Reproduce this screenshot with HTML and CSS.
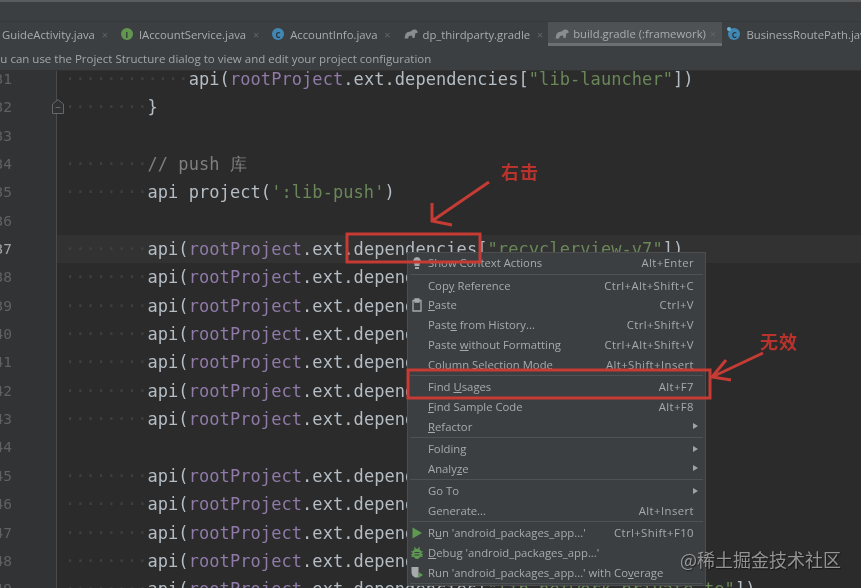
FILE: index.html
```html
<!DOCTYPE html>
<html lang="en">
<head>
  <meta charset="UTF-8">
  <title>build.gradle</title>
  <link rel="stylesheet" href="styles.css">
</head>
<body>
<div class="page">
  <div class="titlebar"></div>

  <div class="tabs">
    <div class="tab first"><span class="tab-name">GuideActivity.java</span><span class="close">×</span></div>
    <div class="tab"><span class="badge green">I</span><span class="tab-name">IAccountService.java</span><span class="close">×</span></div>
    <div class="tab"><span class="badge blue">C</span><span class="tab-name">AccountInfo.java</span><span class="close">×</span></div>
    <div class="tab">
      <svg class="elephant" viewBox="0 0 14 10"><path d="M0.500 9.500 L1.500 5 Q3 2 7 2.500 Q8 0 11 0.500 Q14 1 13.500 4 L11.500 4 L10.500 9 L8.500 9 L8 6.500 L5 7 L4 9.500 Z"/></svg>
      <span class="tab-name">dp_thirdparty.gradle</span><span class="close">×</span>
    </div>
    <div class="tab selected">
      <svg class="elephant" viewBox="0 0 14 10"><path d="M0.500 9.500 L1.500 5 Q3 2 7 2.500 Q8 0 11 0.500 Q14 1 13.500 4 L11.500 4 L10.500 9 L8.500 9 L8 6.500 L5 7 L4 9.500 Z"/></svg>
      <span class="tab-name">build.gradle (:framework)</span><span class="close">×</span>
    </div>
    <div class="tab"><span class="badge blue pin">C</span><span class="tab-name">BusinessRoutePath.java</span></div>
  </div>

  <div class="notice">You can use the Project Structure dialog to view and edit your project configuration</div>

  <div class="editor">
    <div class="line"><div class="gutter"><span class="num">31</span></div><div class="code"><i>············</i>api(<b>rootProject</b>.ext.dependencies[<s>"lib-launcher"</s>])</div></div>
    <div class="line"><div class="gutter"><span class="num">32</span></div><div class="code"><i>········</i>}</div>
      <svg class="fold" viewBox="0 0 12 15"><path d="M0.500 14.500 V5 L6 0.700 L11.500 5 V14.500 Z"/><path d="M3.500 8.500 H8.500"/></svg>
    </div>
    <div class="line"><div class="gutter"><span class="num">33</span></div><div class="code"></div></div>
    <div class="line"><div class="gutter"><span class="num">34</span></div><div class="code"><i>········</i><em>// push 库</em></div></div>
    <div class="line"><div class="gutter"><span class="num">35</span></div><div class="code"><i>········</i>api project(<s>':lib-push'</s>)</div></div>
    <div class="line"><div class="gutter"><span class="num">36</span></div><div class="code"></div></div>
    <div class="line current"><div class="gutter"><span class="num">37</span></div><div class="code"><i>········</i>api(<b>rootProject</b>.ext.dependencies[<s>"recyclerview-v7"</s>])</div></div>
    <div class="line"><div class="gutter"><span class="num">38</span></div><div class="code"><i>········</i>api(<b>rootProject</b>.ext.dependencies[<s>"cardview-v7"</s>])</div></div>
    <div class="line"><div class="gutter"><span class="num">39</span></div><div class="code"><i>········</i>api(<b>rootProject</b>.ext.dependencies[<s>"design"</s>])</div></div>
    <div class="line"><div class="gutter"><span class="num">40</span></div><div class="code"><i>········</i>api(<b>rootProject</b>.ext.dependencies[<s>"appcompat-v7"</s>])</div></div>
    <div class="line"><div class="gutter"><span class="num">41</span></div><div class="code"><i>········</i>api(<b>rootProject</b>.ext.dependencies[<s>"support-v4"</s>])</div></div>
    <div class="line"><div class="gutter"><span class="num">42</span></div><div class="code"><i>········</i>api(<b>rootProject</b>.ext.dependencies[<s>"gson"</s>])</div></div>
    <div class="line"><div class="gutter"><span class="num">43</span></div><div class="code"><i>········</i>api(<b>rootProject</b>.ext.dependencies[<s>"okhttp"</s>])</div></div>
    <div class="line"><div class="gutter"><span class="num">44</span></div><div class="code"></div></div>
    <div class="line"><div class="gutter"><span class="num">45</span></div><div class="code"><i>········</i>api(<b>rootProject</b>.ext.dependencies[<s>"retrofit"</s>])</div></div>
    <div class="line"><div class="gutter"><span class="num">46</span></div><div class="code"><i>········</i>api(<b>rootProject</b>.ext.dependencies[<s>"rxjava"</s>])</div></div>
    <div class="line"><div class="gutter"><span class="num">47</span></div><div class="code"><i>········</i>api(<b>rootProject</b>.ext.dependencies[<s>"rxandroid"</s>])</div></div>
    <div class="line"><div class="gutter"><span class="num">48</span></div><div class="code"><i>········</i>api(<b>rootProject</b>.ext.dependencies[<s>"glide"</s>])</div></div>
    <div class="line"><div class="gutter"><span class="num">49</span></div><div class="code"><i>········</i>api(<b>rootProject</b>.ext.dependencies[<s>"lib-network-private-te"</s>])</div></div>
  </div>

  <div class="menu">
    <div class="item"><svg class="icon" viewBox="0 0 12 14"><path class="bulb" d="M6 1 A4 4 0 0 1 8.500 8 V10 H3.500 V8 A4 4 0 0 1 6 1 Z M4 11 H8 V13 H4 Z"/></svg><span>Show Context Actions</span><kbd>Alt+Enter</kbd></div>
    <hr>
    <div class="item"><span>Cop<u>y</u> Reference</span><kbd>Ctrl+Alt+Shift+C</kbd></div>
    <div class="item"><svg class="icon" viewBox="0 0 12 14"><path class="clip" d="M2 2.500 H10 V13 H2 Z M4 1 H8 V4 H4 Z"/></svg><span><u>P</u>aste</span><kbd>Ctrl+V</kbd></div>
    <div class="item"><span>Past<u>e</u> from History...</span><kbd>Ctrl+Shift+V</kbd></div>
    <div class="item"><span>Paste <u>w</u>ithout Formatting</span><kbd>Ctrl+Alt+Shift+V</kbd></div>
    <div class="item"><span>Column Selection Mode</span><kbd>Alt+Shift+Insert</kbd></div>
    <hr>
    <div class="item"><span>Find <u>U</u>sages</span><kbd>Alt+F7</kbd></div>
    <div class="item"><span><u>F</u>ind Sample Code</span><kbd>Alt+F8</kbd></div>
    <div class="item"><span><u>R</u>efactor</span><span class="arrow"></span></div>
    <hr>
    <div class="item"><span>Folding</span><span class="arrow"></span></div>
    <div class="item"><span>Analy<u>z</u>e</span><span class="arrow"></span></div>
    <hr>
    <div class="item"><span>Go To</span><span class="arrow"></span></div>
    <div class="item"><span>Generate...</span><kbd>Alt+Insert</kbd></div>
    <hr>
    <div class="item"><svg class="icon" viewBox="0 0 12 14"><path class="run" d="M1.500 1.500 L11 7 L1.500 12.500 Z"/></svg><span>R<u>u</u>n 'android_packages_app...'</span><kbd>Ctrl+Shift+F10</kbd></div>
    <div class="item"><svg class="icon" viewBox="0 0 12 14"><path class="run" d="M4 1 L5 2.800 H7 L8 1 L9 1.500 L8.300 3.200 Q9.800 4 10.300 5.500 L11.800 5 V6.200 L10.500 6.500 V8 H11.800 V9.200 H10.300 L11.800 10.500 L11 11.300 L9.500 10.400 Q8 13 6 13 Q4 13 2.500 10.400 L1 11.300 L0.200 10.500 L1.700 9.200 H0.200 V8 H1.500 V6.500 L0.200 6.200 V5 L1.700 5.500 Q2.200 4 3.700 3.200 L3 1.500 Z"/><path class="bug-bar" d="M3.500 6.500 H8.500 M3.500 9 H8.500"/></svg><span><u>D</u>ebug 'android_packages_app...'</span></div>
    <div class="item"><svg class="icon" viewBox="0 0 12 14"><path class="shield" d="M0.500 2 H7.500 V12.500 H4 Q0.500 11 0.500 7 Z"/><path class="run" d="M7.500 7 L12 10 L7.500 13 Z"/></svg><span>Run 'android_packages_app...' with Co<u>v</u>erage</span></div>
    <hr>
  </div>

  <svg class="marks" viewBox="0 0 861 588">
    <rect x="347" y="234" width="133" height="28"/>
    <rect x="408" y="370" width="302" height="28"/>
    <path d="M489 182 L432 221 M432 203 L432 221 L452 225"/>
    <path d="M763 353 L712 377 M726 360 L712 377 L731 380"/>
  </svg>
  <div class="note note-click">右击</div>
  <div class="note note-bad">无效</div>

  <div class="watermark">@稀土掘金技术社区</div>
</div>
</body>
</html>
```

FILE: styles.css
```css
html, body {
  margin: 0;
  background: #2b2b2b;
}

.page {
  position: relative;
  width: 861px;
  height: 588px;
  overflow: hidden;
  background: #2b2b2b;
  font-family: "Open Sans", sans-serif;
  filter: blur(0.45px);
}

.titlebar {
  height: 22px;
  box-sizing: border-box;
  background: #3c3f41;
  border-top: 2px solid #5a5b5c;
  border-bottom: 1px solid #37393b;
}

/* tabs */
.tabs {
  display: flex;
  height: 25px;
  background: #3c3f41;
  color: #a9acae;
  font-size: 11.3px;
  white-space: nowrap;
  overflow: hidden;
}

.tab {
  display: flex;
  flex: none;
  align-items: center;
  height: 24px;
}

.tab.first { padding-left: 2px; }

.tab.selected {
  box-sizing: border-box;
  margin-left: 3px;
  padding: 2px 4.500px 0 7px;
  background: #4e5254;
  border-bottom: 3px solid #6c7073;
}

.tab-name { margin-left: 6px; }
.tab.first .tab-name { margin-left: 0; }
.elephant + .tab-name { margin-left: 4px; }

.close {
  margin-left: 5px;
  width: 10px;
  text-align: center;
  color: #626567;
  font-size: 11px;
}
.tab.selected .close { margin-left: 2px; }

.badge {
  position: relative;
  display: flex;
  align-items: center;
  justify-content: center;
  width: 12px;
  height: 12px;
  margin-left: 11px;
  border-radius: 50%;
  font-size: 8px;
  font-weight: 700;
  color: #30343a;
}
.badge.green { background: #62964f; }
.badge.blue { background: #3f88b3; }
.badge.pin { margin-left: 6px; }
.badge.pin::before {
  content: "";
  position: absolute;
  left: -1px;
  top: -1px;
  width: 4px;
  height: 4px;
  border-radius: 50%;
  background: #6db3d8;
}

.elephant {
  width: 14px;
  height: 10px;
  margin-left: 12px;
  fill: #8a8d8f;
}
.tab.selected .elephant { margin-left: 0; }

/* notification */
.notice {
  height: 23px;
  margin-left: -13px;
  line-height: 23px;
  color: #a3a6a8;
  font-size: 11.5px;
  background: #3c3f41;
  white-space: nowrap;
}

/* code */
.editor {
  height: 518px;
  overflow: hidden;
  border-top: 1px solid #323232;
  box-sizing: border-box;
}

.line {
  position: relative;
  display: flex;
  height: 28.35px;
  color: #b4bcc4;
  font: 17px/28.35px "DejaVu Sans Mono", monospace;
  letter-spacing: 0.07px;
  white-space: nowrap;
}

.line:first-child { margin-top: -6px; }

.gutter {
  flex: none;
  display: flex;
  width: 57px;
  box-sizing: border-box;
  background: #313335;
  border-right: 1px solid #4a4c4e;
}

.num {
  display: flex;
  justify-content: flex-end;
  width: 12px;
  overflow: hidden;
  color: #5f6265;
  font-size: 14.5px;
}

.code {
  padding-left: 8px;
  flex: 1;
}

.code i {
  font-style: normal;
  color: #3e4143;
}
.code b { font-weight: 400; color: #8f7aa8; }
.code s { text-decoration: none; color: #6a8759; }
.code em { font-style: normal; color: #7f7f7f; }

.line.current .code { background: #323232; }
.line.current .num { color: #a4a3a3; }

.fold {
  position: absolute;
  left: 52px;
  top: 6px;
  width: 12px;
  height: 15px;
  fill: #2f3133;
  stroke: #65686a;
  stroke-width: 1;
}

/* context menu */
.menu {
  position: absolute;
  left: 407px;
  top: 252px;
  width: 299px;
  box-sizing: border-box;
  background: #3c3f41;
  border: 1px solid #4b4d4f;
  color: #a7aaac;
  font-size: 11.3px;
}

.item {
  position: relative;
  display: flex;
  justify-content: space-between;
  align-items: center;
  height: 19.8px;
  padding: 0 11px 0 20px;
  white-space: nowrap;
}

.menu u { text-underline-offset: 1px; }

.menu hr {
  height: 1px;
  margin: 0.75px 2px;
  border: 0;
  background: #4f5254;
}

.menu kbd {
  font: inherit;
  letter-spacing: 0.43px;
}

.arrow {
  margin-right: -4px;
  border-left: 5px solid #a0a3a5;
  border-top: 3.500px solid transparent;
  border-bottom: 3.500px solid transparent;
}

.icon {
  position: absolute;
  left: 3px;
  top: 3px;
  width: 12px;
  height: 14px;
}

.bulb { fill: #a7aaac; }
.clip { fill: none; stroke: #a7aaac; stroke-width: 1.300; }
.run { fill: #5f9a52; }
.bug-bar { fill: none; stroke: #3c3f41; stroke-width: 1; }
.shield { fill: #a7aaac; }

/* red annotations */
.marks {
  position: absolute;
  left: 0;
  top: 0;
  width: 861px;
  height: 588px;
  fill: none;
  stroke: #c63b33;
  stroke-width: 3;
}

.note {
  position: absolute;
  color: #b9332c;
  font: 700 18px/20px "Noto Sans CJK SC", sans-serif;
  letter-spacing: 1px;
}
.note-click { left: 501px; top: 161px; }
.note-bad { left: 760px; top: 331px; }

.watermark {
  position: absolute;
  left: 680px;
  top: 547px;
  color: rgba(190, 190, 190, 0.72);
  font: 18px/24px "Noto Sans CJK SC", sans-serif;
  text-shadow: 1px 1px 1px rgba(0, 0, 0, 0.5);
  white-space: nowrap;
}
```
